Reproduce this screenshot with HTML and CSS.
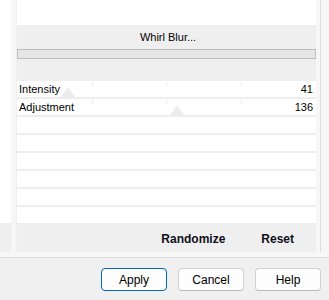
FILE: index.html
```html
<!DOCTYPE html>
<html lang="en">

<head>
  <title>Whirl Blur</title>
  <meta name="viewport" content="width=device-width, initial-scale=1">
  <link rel="stylesheet" href="styles.css">
</head>

<body>
  <div class="frame">
    <div class="side-left"></div>
    <div class="rail"></div>

    <!-- Effect panel -->
    <div class="panel">
      <div class="top"></div>
      <div class="head">
        <div class="title">Whirl Blur...</div>
        <div class="bar"></div>
      </div>

      <div class="rows">
        <div class="row slider">
          <span>Intensity</span>
          <span>41</span>
          <i class="thumb" style="left: 17%"></i>
        </div>
        <div class="row slider">
          <span>Adjustment</span>
          <span>136</span>
          <i class="thumb" style="left: 53.5%"></i>
        </div>
        <div class="row"></div>
        <div class="row"></div>
        <div class="row"></div>
        <div class="row"></div>
        <div class="row"></div>
        <div class="row"></div>
      </div>

      <div class="actions">
        <span>Randomize</span>
        <span>Reset</span>
      </div>
    </div>

    <div class="rail-right"></div>
    <div class="side-right"></div>
  </div>

  <div class="sep"></div>

  <div class="footer">
    <button class="primary">Apply</button>
    <button>Cancel</button>
    <button>Help</button>
  </div>
</body>

</html>
```

FILE: styles.css
```css
* {
  box-sizing: border-box;
  margin: 0;
  padding: 0;
}

body {
  width: 329px;
  height: 300px;
  overflow: hidden;
  background: #f0f0f0;
  font-family: 'Liberation Sans', Arial, sans-serif;
  font-size: 11px;
  color: #000;
}

.frame {
  display: flex;
  height: 252px;
}

.side-left {
  width: 11px;
  background: linear-gradient(#fff 0 223px, #efefef 223px);
}

.rail {
  width: 5px;
  background: #f6f6f6;
}

.panel {
  width: 299px;
  margin-left: 1px;
  display: flex;
  flex-direction: column;
}

.rail-right {
  width: 4px;
  background: #f7f7f7;
  border-right: 1px solid #dedede;
  box-sizing: content-box;
}

.side-right {
  width: 8px;
  background: #f6f6f6;
}

.top {
  height: 25px;
  background: #fff;
}

.head {
  height: 56px;
  background: #efefef;
  padding-top: 5px;
}

.title {
  text-align: center;
  font-size: 11px;
  line-height: 14px;
  padding-left: 3px;
}

.bar {
  height: 10px;
  margin-top: 5px;
  background: #e6e6e6;
  border: 1px solid #bdbdbd;
}

.rows {
  display: flex;
  flex-direction: column;
  gap: 2px;
  background: #eeeeee;
}

.row {
  position: relative;
  height: 16px;
  background: #fff;
  display: flex;
  justify-content: space-between;
  align-items: center;
  padding: 0 3px 0 2px;
}

.slider {
  background:
    linear-gradient(#ececec, #ececec) 25% 1px / 1px 4px no-repeat,
    linear-gradient(#ececec, #ececec) 50% 1px / 1px 4px no-repeat,
    linear-gradient(#ececec, #ececec) 75% 1px / 1px 4px no-repeat,
    #fff;
}

.slider span {
  position: relative;
  z-index: 1;
}

.thumb {
  position: absolute;
  bottom: 0;
  width: 0;
  height: 0;
  margin-left: -7px;
  border-left: 7px solid transparent;
  border-right: 7px solid transparent;
  border-bottom: 10px solid #ececec;
}

.actions {
  height: 29px;
  background: #efefef;
  display: flex;
  justify-content: flex-end;
  align-items: center;
  gap: 36px;
  padding: 3px 22px 0 0;
  font-size: 12px;
  font-weight: bold;
  color: #10101c;
}

.sep {
  height: 6px;
  background: #f7f7f7;
  border-bottom: 1px solid #dcdcdc;
}

.footer {
  display: flex;
  justify-content: flex-end;
  gap: 11px;
  padding: 10px 8px 0 0;
}

button {
  width: 66px;
  height: 23px;
  background: #fdfdfd;
  border: 1px solid #d0d0d0;
  border-bottom-color: #bcbcbc;
  border-radius: 4px;
  font-family: 'Liberation Sans', Arial, sans-serif;
  font-size: 12px;
  color: #000;
}

.primary {
  border: 1px solid #0067c0;
}
```
